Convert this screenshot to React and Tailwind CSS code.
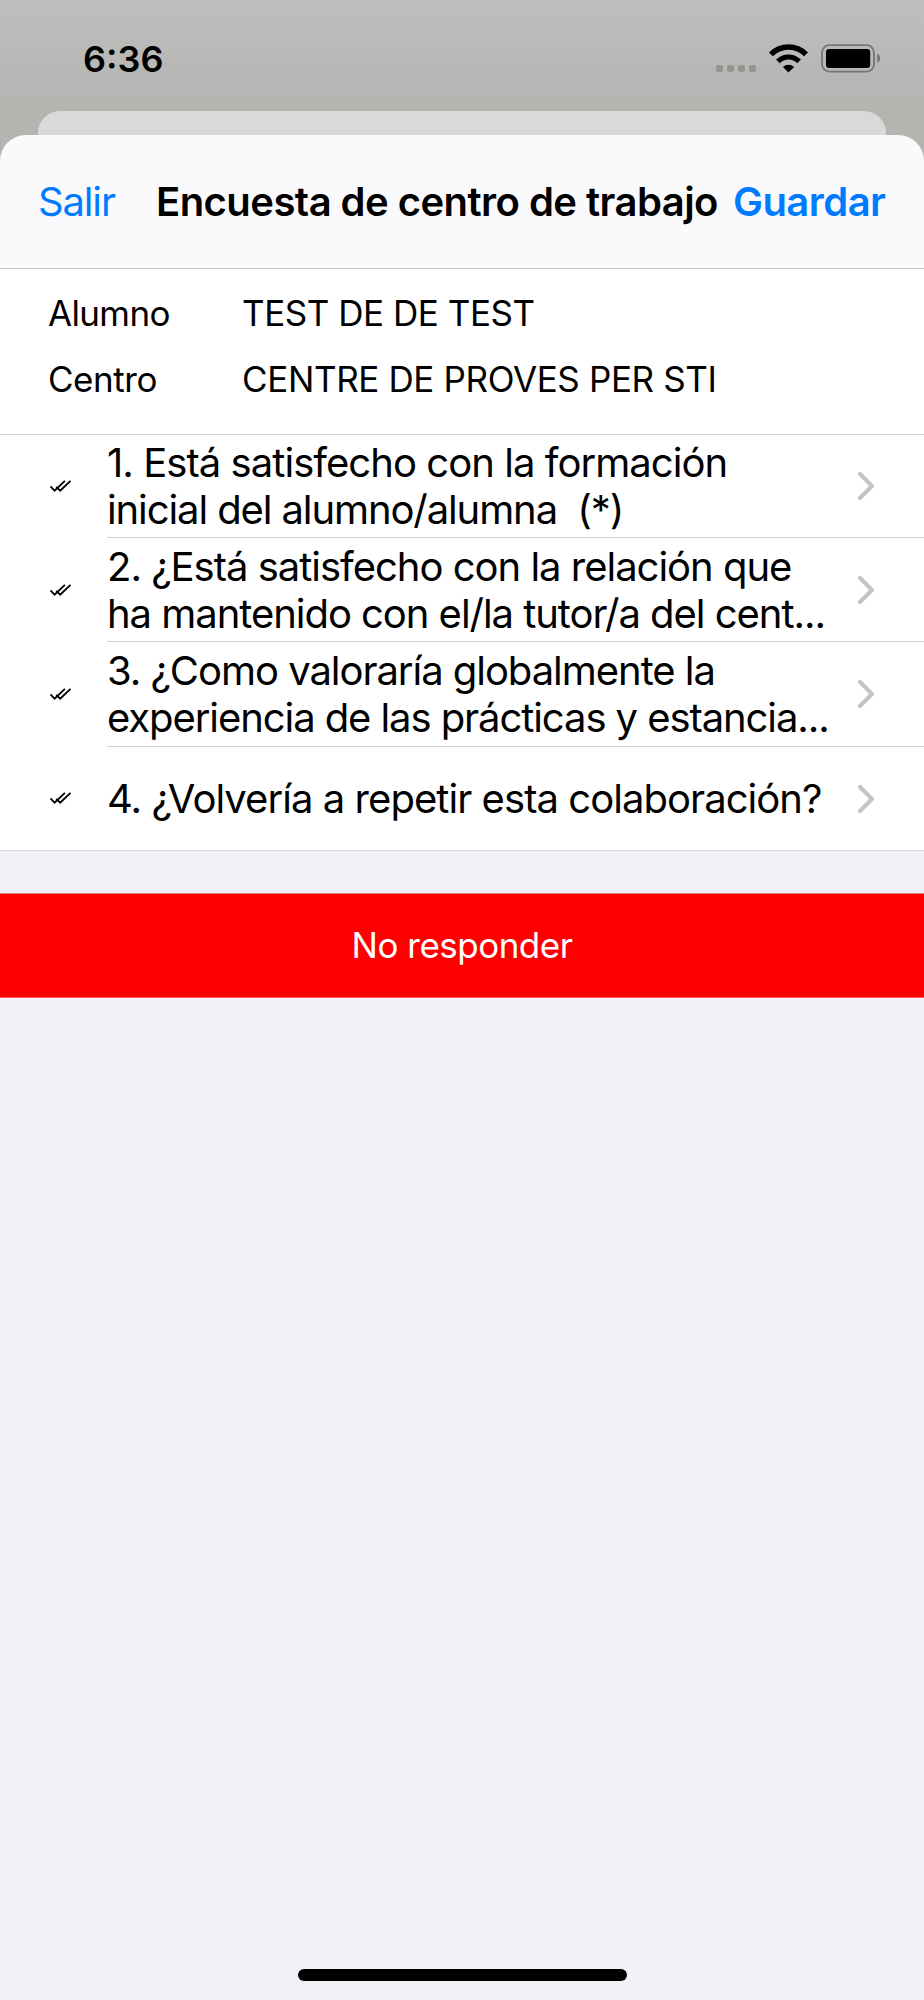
const details = [
  {
    label: "Alumno",
    labelSpacing: "tracking-[-0.65px]",
    value: "TEST DE DE TEST",
    valueSpacing: "tracking-[-0.46px]",
  },
  {
    label: "Centro",
    labelSpacing: "tracking-[-0.45px]",
    value: "CENTRE DE PROVES PER STI",
    valueSpacing: "tracking-[-0.36px]",
  },
];

const questions = [
  {
    height: "h-[103px]",
    lines: [
      { text: "1. Está satisfecho con la formación", spacing: "tracking-[-0.95px]" },
      { text: "inicial del alumno/alumna\u00a0 (*)", spacing: "tracking-[-1.1px]" },
    ],
  },
  {
    height: "h-[104px] pt-px",
    lines: [
      { text: "2. ¿Está satisfecho con la relación que", spacing: "tracking-[-1.01px]" },
      { text: "ha mantenido con el/la tutor/a del cent...", spacing: "tracking-[-1.04px]" },
    ],
  },
  {
    height: "h-[105px]",
    lines: [
      { text: "3. ¿Como valoraría globalmente la", spacing: "tracking-[-1.04px]" },
      { text: "experiencia de las prácticas y estancia...", spacing: "tracking-[-1.08px]" },
    ],
  },
  {
    height: "h-[103px]",
    lines: [{ text: "4. ¿Volvería a repetir esta colaboración?", spacing: "tracking-[-0.95px]" }],
  },
];

function CellularDots() {
  return (
    <div className="mt-[19px] flex gap-1">
      {[0, 1, 2, 3].map((i) => (
        <span key={i} className="size-[7px] rounded-[2px] bg-[#939591]" />
      ))}
    </div>
  );
}

function WifiIcon() {
  return (
    <svg className="ml-[13px] h-[29px] w-[39px]" viewBox="0 0 39 29" fill="none" stroke="#000">
      <path d="M1.9 10.4 A24.8 24.8 0 0 1 37.1 10.4" strokeWidth="5.4" />
      <path d="M8.9 17.4 A15 15 0 0 1 30.1 17.4" strokeWidth="5.2" />
      <path d="M19.5 28.6 L13.9 23 A8 8 0 0 1 25.1 23 Z" fill="#000" stroke="none" />
    </svg>
  );
}

function BatteryIcon() {
  return (
    <svg className="ml-[13px] h-[29px] w-[61px]" viewBox="0 0 61 29">
      <rect x="1" y="1.2" width="52" height="26.4" rx="7.5" fill="none" stroke="#757673" strokeWidth="1.8" />
      <rect x="5" y="5" width="44.2" height="18.9" rx="3.2" fill="#000" />
      <path d="M56.2 9.8 C60.2 11.4 60.2 17.2 56.2 18.8 Z" fill="#757673" />
    </svg>
  );
}

function DoubleCheck() {
  return (
    <svg className="-mt-px h-[12px] w-[22px]" viewBox="0 0 22 12" fill="none" stroke="#000" strokeWidth="1.8">
      <path d="M0.5 6.5 L4.6 10.7 L14.9 0.8" />
      <path d="M6.2 6.9 L10.2 10.7 L20.5 0.8" />
    </svg>
  );
}

function Chevron() {
  return (
    <svg
      className="h-[30px] w-[18px]"
      viewBox="0 0 18 30"
      fill="none"
      stroke="#c4c4c7"
      strokeWidth="4.2"
      strokeLinecap="round"
      strokeLinejoin="round"
    >
      <path d="M3 3 L15 15 L3 27" />
    </svg>
  );
}

export default function App() {
  return (
    <div className="flex h-[2000px] w-[924px] flex-col overflow-hidden bg-[#f2f1f7] font-['Inter',sans-serif] whitespace-nowrap text-black">
      <div className="bg-linear-to-b from-[#bfbebf] via-[#b3b5b1] via-[111px] to-[#b3b5b1]">
        <div className="flex h-[111px] items-center justify-between pt-[6px] pr-[42px] pl-[83px]">
          <span className="text-[36px] font-semibold">6:36</span>
          <div className="flex items-center">
            <CellularDots />
            <WifiIcon />
            <BatteryIcon />
          </div>
        </div>
        <div className="mx-[38px] h-6 rounded-t-[22px] bg-[#d9d9d9]" />
        <header className="flex h-[134px] items-center rounded-t-[26px] border-b border-[#c6c6c9] bg-[#fafafd] pl-[38px] text-[40px]">
          <button className="w-[118px] text-left tracking-[-1.15px] text-[#007aff]">Salir</button>
          <h1 className="w-[577px] font-semibold tracking-[-0.54px]">Encuesta de centro de trabajo</h1>
          <button className="font-semibold tracking-[-0.55px] text-[#007aff]">Guardar</button>
        </header>
      </div>

      <dl className="h-[166px] border-b border-[#d3d3d5] bg-white pt-[11px] pl-[48px] text-[35px] leading-[66.3px]">
        {details.map((d) => (
          <div key={d.label} className="flex">
            <dt className={`w-[194px] ${d.labelSpacing}`}>{d.label}</dt>
            <dd className={d.valueSpacing}>{d.value}</dd>
          </div>
        ))}
      </dl>

      <ul className="border-b border-[#d3d3d6] bg-white">
        {questions.map((q, i) => (
          <li key={i} className={`flex items-center pl-[50px] ${q.height}`}>
            <DoubleCheck />
            <div
              className={`ml-[35px] flex h-full flex-1 items-center justify-between pr-[49px] ${
                i < 3 ? "border-b border-[#d0d0d3]" : "pt-px"
              }`}
            >
              <div className="text-[40px] leading-[47.5px]">
                {q.lines.map((line) => (
                  <p key={line.text} className={line.spacing}>
                    {line.text}
                  </p>
                ))}
              </div>
              <Chevron />
            </div>
          </li>
        ))}
      </ul>

      <button className="mt-[42px] h-[105px] shrink-0 border-y border-t-[#e08488] border-b-[#fa5a5c] bg-[#ff0000] text-[35px] tracking-[-0.5px] text-white">
        No responder
      </button>

      <div className="mt-auto mb-[19px] ml-[298px] h-3 w-[329px] rounded-full bg-black" />
    </div>
  );
}
